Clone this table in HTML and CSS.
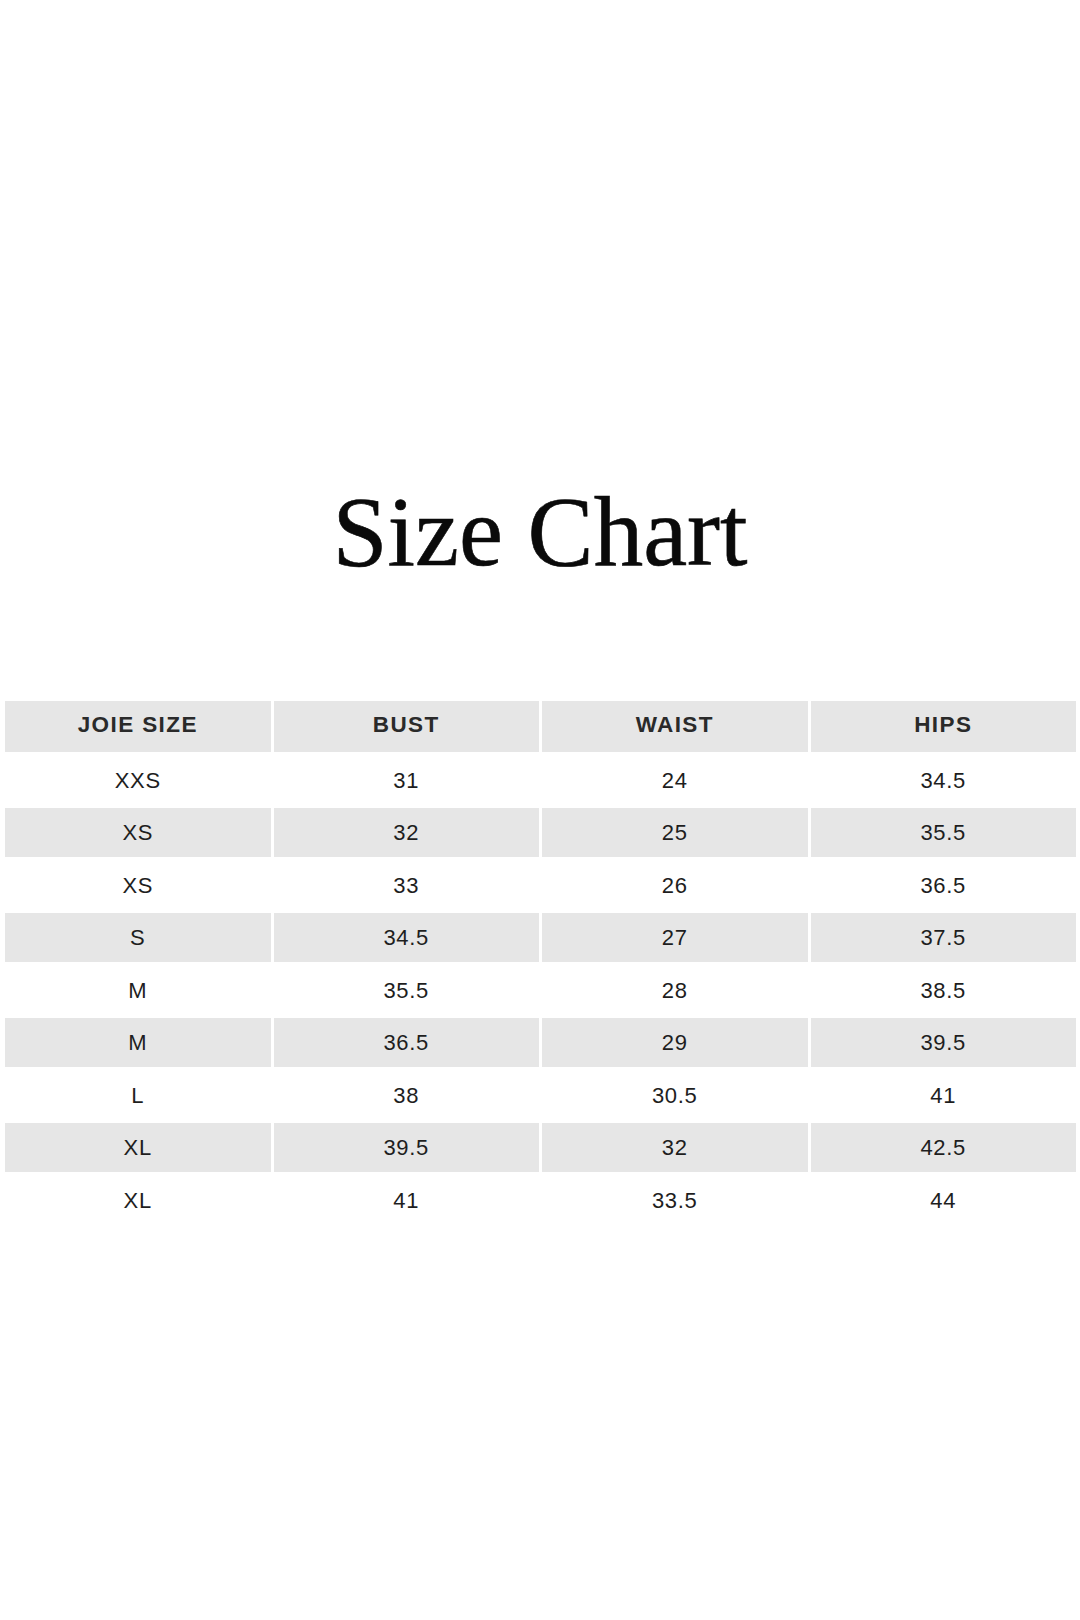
FILE: index.html
```html
<!DOCTYPE html>
<html>
<head>
<meta charset="utf-8">
<title>Size Chart</title>
<link rel="stylesheet" href="styles.css">
</head>
<body>
<h1 class="title">Size Chart</h1>
<div class="chart">
  <div class="cell head">JOIE SIZE</div><div class="cell head">BUST</div><div class="cell head">WAIST</div><div class="cell head">HIPS</div>
  <div class="cell">XXS</div><div class="cell">31</div><div class="cell">24</div><div class="cell">34.5</div>
  <div class="cell alt">XS</div><div class="cell alt">32</div><div class="cell alt">25</div><div class="cell alt">35.5</div>
  <div class="cell">XS</div><div class="cell">33</div><div class="cell">26</div><div class="cell">36.5</div>
  <div class="cell alt">S</div><div class="cell alt">34.5</div><div class="cell alt">27</div><div class="cell alt">37.5</div>
  <div class="cell">M</div><div class="cell">35.5</div><div class="cell">28</div><div class="cell">38.5</div>
  <div class="cell alt">M</div><div class="cell alt">36.5</div><div class="cell alt">29</div><div class="cell alt">39.5</div>
  <div class="cell">L</div><div class="cell">38</div><div class="cell">30.5</div><div class="cell">41</div>
  <div class="cell alt">XL</div><div class="cell alt">39.5</div><div class="cell alt">32</div><div class="cell alt">42.5</div>
  <div class="cell">XL</div><div class="cell">41</div><div class="cell">33.5</div><div class="cell">44</div>
</div>
</body>
</html>
```

FILE: styles.css
```css
html, body {
  margin: 0;
  padding: 0;
  background: #ffffff;
}

body {
  width: 1080px;
  height: 1620px;
  overflow: hidden;
}

.title {
  margin: 0;
  padding-top: 477px;
  height: 110px;
  line-height: 110px;
  font-family: "Liberation Serif", "Times New Roman", serif;
  font-weight: normal;
  font-size: 99px;
  color: #0a0a0a;
  -webkit-text-stroke: 0.6px #0a0a0a;
  text-align: center;
}

.chart {
  margin-top: 114px;
  padding: 0 4px 0 5px;
  display: grid;
  grid-template-columns: repeat(4, 1fr);
  grid-template-rows: 51px;
  grid-auto-rows: 49.5px;
  column-gap: 3px;
  row-gap: 3px;
}

.cell {
  display: flex;
  align-items: center;
  justify-content: center;
  font-family: "Liberation Sans", Arial, sans-serif;
  font-size: 22px;
  letter-spacing: 0.7px;
  color: #1e1e1e;
  padding-top: 2px;
  box-sizing: border-box;
}

.head {
  background: #e6e6e6;
  font-weight: bold;
  font-size: 22.5px;
  letter-spacing: 1.4px;
  color: #2a2a2a;
  padding-top: 0;
  padding-bottom: 3px;
}

.alt {
  background: #e6e6e6;
}
```
